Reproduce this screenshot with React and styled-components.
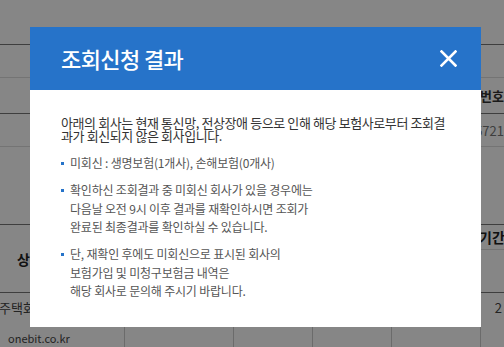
import React from 'react';
import styled, { createGlobalStyle } from 'styled-components';

const GlobalStyle = createGlobalStyle`
  html, body {
    margin: 0;
    padding: 0;
    background: #ffffff;
    font-family: "Noto Sans CJK KR", "Noto Sans", sans-serif;
    overflow: hidden;
  }
`

const Page = styled.div`
  width: 504px;
  height: 347px;
  display: flex;
  flex-direction: column;
  color: #333;
`

const TopSpace = styled.div`
  height: ${props => props.h}px;
  flex-shrink: 0;
`

const Row = styled.div`
  height: ${props => props.h}px;
  display: flex;
  align-items: center;
  flex-shrink: 0;
  border-top: ${props => props.top ? `1px solid ${props.top}` : 'none'};
  box-sizing: border-box;
`

const EdgeText = styled.span`
  margin-left: auto;
  margin-right: ${props => props.right || 0}px;
  font-size: 13px;
  font-weight: ${props => props.bold ? 700 : 400};
  color: ${props => props.color || '#333'};
  white-space: nowrap;
`

const HeadRow = styled.div`
  height: 68px;
  display: grid;
  grid-template-columns: 477px 27px;
  border-top: 1px solid #777;
  box-sizing: border-box;
  flex-shrink: 0;
`

const HeadMain = styled.div`
  display: flex;
  align-items: center;
  padding-left: 17px;
  font-size: 14px;
  font-weight: 700;
  color: #222;
`

const HeadSide = styled.div`
  display: grid;
  grid-template-rows: 25px 1fr;
  border-left: 1px solid #ddd;
`

const HeadSideTop = styled.div`
  display: flex;
  align-items: center;
  padding-left: 1px;
  font-size: 14px;
  font-weight: 700;
  color: #222;
  border-bottom: 1px solid #ddd;
  white-space: nowrap;
  overflow: hidden;
`

const DataRow = styled.div`
  height: 30px;
  display: flex;
  align-items: center;
  justify-content: space-between;
  border-top: 1px solid #777;
  box-sizing: border-box;
  font-size: 13px;
  color: #444;
  flex-shrink: 0;
`

const DataText = styled.span`
  margin: ${props => props.m || '0'};
`

const FooterRow = styled.div`
  flex: 1;
  display: grid;
  grid-template-columns: 125px 109px 79px 79px 89px 1fr;
  font-size: 11px;
  color: #444;
`

const FooterCell = styled.div`
  border-right: 1px solid #ccc;
  padding: 8px 0 0 8px;
  &:last-child { border-right: none; }
`

const Overlay = styled.div`
  position: fixed;
  inset: 0;
  background: rgba(0, 0, 0, 0.475);
`

const Modal = styled.div`
  position: fixed;
  left: 30px;
  top: 27px;
  width: 451px;
  height: 300px;
  background: #ffffff;
  display: flex;
  flex-direction: column;
`

const ModalHeader = styled.div`
  height: 63px;
  background: #2673c9;
  display: flex;
  align-items: center;
  justify-content: space-between;
  padding: 0 24px 0 31px;
  flex-shrink: 0;
`

const Title = styled.h2`
  margin: 0;
  font-size: 22px;
  font-weight: 500;
  letter-spacing: -0.6px;
  color: #ffffff;
  line-height: 1;
  padding-bottom: 2px;
`

const CloseButton = styled.button`
  border: none;
  background: none;
  padding: 0;
  width: 18px;
  height: 18px;
  display: flex;
  align-items: center;
  justify-content: center;
  cursor: pointer;
`

const ModalBody = styled.div`
  padding: 27px 31px 0 31px;
`

const Lead = styled.p`
  margin: 0;
  font-size: 13px;
  line-height: 12.5px;
  letter-spacing: -0.4px;
  color: #333;
  word-break: break-all;
`

const List = styled.ul`
  list-style: none;
  margin: 12px 0 0 0;
  padding: 0;
  display: flex;
  flex-direction: column;
  gap: 8.5px;
`

const Item = styled.li`
  position: relative;
  padding-left: 9px;
  font-size: 12px;
  line-height: 18.5px;
  letter-spacing: -0.2px;
  color: #555;
  &::before {
    content: '';
    position: absolute;
    left: 0;
    top: 8px;
    width: 3px;
    height: 3px;
    background: #2673c9;
  }
`

const CloseIcon = () => (
  <svg width="17" height="17" viewBox="0 0 17 17">
    <path d="M1.5 1.5 L15.5 15.5 M15.5 1.5 L1.5 15.5" stroke="#ffffff" strokeWidth="2.6" strokeLinecap="square" />
  </svg>
)

export default function App() {
  return (
    <>
      <GlobalStyle />
      <Page>
        <TopSpace h={44} />
        <Row h={33} top="#777" />
        <Row h={36} top="#ddd"><EdgeText bold>번호</EdgeText></Row>
        <Row h={33} top="#777"><EdgeText color="#777">5721</EdgeText></Row>
        <Row h={78} top="#ddd" />
        <HeadRow>
          <HeadMain>상품명</HeadMain>
          <HeadSide>
            <HeadSideTop>기간</HeadSideTop>
            <div />
          </HeadSide>
        </HeadRow>
        <DataRow>
          <DataText m="0 0 0 -1px">주택화재</DataText>
          <DataText m="0 2px 0 0">2</DataText>
        </DataRow>
        <FooterRow>
          <FooterCell>onebit.co.kr</FooterCell>
          <FooterCell />
          <FooterCell />
          <FooterCell />
          <FooterCell />
          <FooterCell />
        </FooterRow>
      </Page>
      <Overlay />
      <Modal>
        <ModalHeader>
          <Title>조회신청 결과</Title>
          <CloseButton aria-label="닫기"><CloseIcon /></CloseButton>
        </ModalHeader>
        <ModalBody>
          <Lead>아래의 회사는 현재 통신망, 전상장애 등으로 인해 해당 보험사로부터 조회결과가 회신되지 않은 회사입니다.</Lead>
          <List>
            <Item>미회신 : 생명보험(1개사), 손해보험(0개사)</Item>
            <Item>
              확인하신 조회결과 중 미회신 회사가 있을 경우에는<br />
              다음날 오전 9시 이후 결과를 재확인하시면 조회가<br />
              완료된 최종결과를 확인하실 수 있습니다.
            </Item>
            <Item>
              단, 재확인 후에도 미회신으로 표시된 회사의<br />
              보험가입 및 미청구보험금 내역은<br />
              해당 회사로 문의해 주시기 바랍니다.
            </Item>
          </List>
        </ModalBody>
      </Modal>
    </>
  )
}
